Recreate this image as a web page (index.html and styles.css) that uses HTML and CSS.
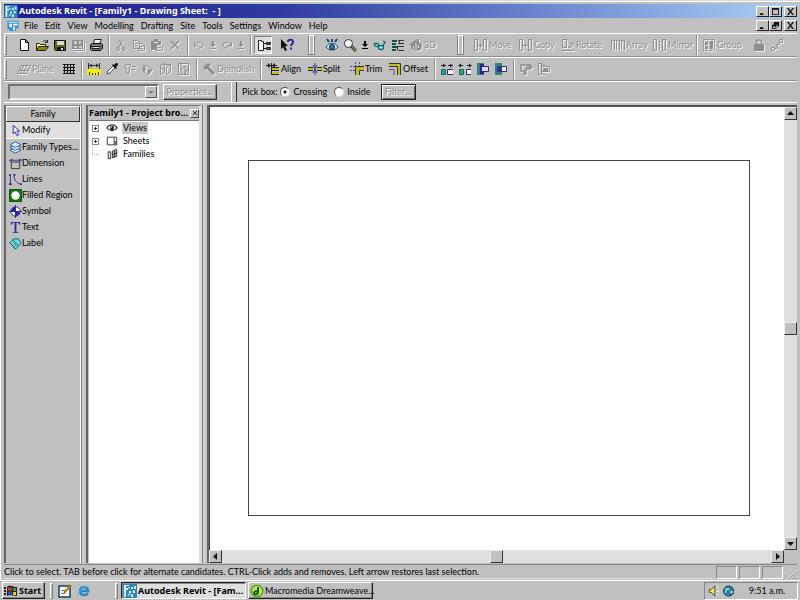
FILE: index.html
```html
<!DOCTYPE html>
<html lang="en">
<head>
<meta charset="utf-8">
<title>Autodesk Revit - [Family1 - Drawing Sheet: - ]</title>
<link rel="stylesheet" href="styles.css">
</head>
<body>
<svg class="defs" aria-hidden="true">
  <symbol id="revit" viewBox="0 0 14 14"><path fill="#2d86b8" d="M0 0h14v14H0z"/><path fill="#d8f0fb" d="M1 1h5v1H3v2h2v2H3v7H1zM8 3h2v2H8zM11 2h2v3h-2zM6 7h2v2H6zM10 7h2v2h-2zM8 10h2v3H8z"/><path fill="none" stroke="#fff" d="M5 3l2 2M10 6l2 2M7 9l-2 3"/></symbol>
  <symbol id="doc" viewBox="0 0 14 14"><path fill="#338fc5" d="M1 2h12v8h-3v3H3v-2H1z"/><path fill="#e5f6ff" d="M2 3h10v1H2zM3 5h3v4H3zM7 5h5v2H7zM7 8h2v4H7z"/></symbol>
  <symbol id="new" viewBox="0 0 14 14"><path fill="#fff" stroke="#111" d="M3.500 1.500h5l3 3v8h-8zM8.500 1.500v3h3"/></symbol>
  <symbol id="open" viewBox="0 0 14 14"><path fill="#ff6" stroke="#222" d="M1.500 12V5.500h3l1 1h5V9"/><path fill="#8a8a00" stroke="#222" d="M1.500 12.500l2-4h10l-3 4z"/><path fill="none" stroke="#222" d="M8 4c1-2 3-2 4 0M12.500 2v2.500H10"/></symbol>
  <symbol id="save" viewBox="0 0 14 14"><path fill="#66660a" stroke="#111" d="M1.500 2.500h11v10h-10l-1-1z"/><path fill="#d8d8d8" d="M4 3h7v4H4z"/><path fill="#111" d="M4 9h7v4H4z"/><path fill="#ddd" d="M8 10h2v2H8z"/></symbol>
  <symbol id="saveall" viewBox="0 0 14 14"><path fill="currentColor" d="M1 2h11v9H1z"/><path fill="#ccc" d="M3 3h3v3H3zM8 3h2v3H8zM3 8h3v2H3zM8 8h3v2H8z"/><path fill="none" stroke="currentColor" d="M3 12.500h10.500V4"/></symbol>
  <symbol id="print" viewBox="0 0 14 14"><path fill="#fff" stroke="#222" d="M4.500 5.500l1-4h7l-2 4z"/><path fill="#777" stroke="#111" d="M1.500 6.500l2-1h9l1 1v4l-2 2h-9l-1-1z"/><path stroke="#222" d="M2 8.500h10M3 10.500h8"/><path stroke="#ddd" d="M4 9.500h6M6 3.500h4"/></symbol>
  <symbol id="cut" viewBox="0 0 14 14"><g fill="none" stroke="currentColor"><path d="M5 2l4 7M9 2L5 9"/><circle cx="4" cy="11" r="1.500"/><circle cx="10" cy="11" r="1.500"/></g></symbol>
  <symbol id="copy" viewBox="0 0 14 14"><path fill="none" stroke="currentColor" d="M1.500 2.500h4l2 2v6h-6zM7.500 5.500h3l2 2v5h-6v-2M3 5.500h3M3 7.500h3M8 8.500h3M8 10.500h3"/></symbol>
  <symbol id="paste" viewBox="0 0 14 14"><path fill="currentColor" d="M1 3h3V1h4v2h3v3H6v6H1z"/><path fill="#d8d8d8" stroke="currentColor" d="M6.500 6.500h4l2 2v4h-6zM8 9.500h3"/><path stroke="#eee" d="M4 4.500h4"/></symbol>
  <symbol id="del" viewBox="0 0 14 14"><path fill="none" stroke="currentColor" stroke-width="1.500" d="M3 3l8 8M11 3l-8 8"/></symbol>
  <symbol id="undo" viewBox="0 0 14 14"><path fill="none" stroke="currentColor" d="M2.500 4v4h4M3 7c3-4 8-3 8 0c0 2-2 3-4 3"/></symbol>
  <symbol id="redo" viewBox="0 0 14 14"><path fill="none" stroke="currentColor" d="M11.500 4v4h-4M11 7c-3-4-8-3-8 0c0 2 2 3 4 3"/></symbol>
  <symbol id="drop" viewBox="0 0 8 14"><path fill="currentColor" d="M3 3h2v3h2L4 9 1 6h2zM1 10h6v1H1z"/></symbol>
  <symbol id="browser" viewBox="0 0 14 14"><path fill="#fff" stroke="#222" stroke-width="1" d="M1.500 2.500h3v1h2v9h-5z"/><path fill="none" stroke="#222" d="M7 5.500h2M7 10.500h2M9.500 4.500h4v2h-4zM9.500 9.500h4v2h-4z"/><path fill="#287a5a" d="M10 5h3v1h-3zM10 10h3v1h-3z"/></symbol>
  <symbol id="help" viewBox="0 0 14 14"><path fill="#111" d="M1 1l7 7H5l2 4-2 1-2-4-2 2z"/><path fill="none" stroke="#2a2a99" stroke-width="2" d="M8 4c0-3 5-3 5 0c0 2-2 2-2 4M11 9.500v2"/></symbol>
  <symbol id="eye" viewBox="0 0 14 14"><path fill="#c5eef8" stroke="#164c72" d="M1 9c3-5 9-5 12 0c-3 4-9 4-12 0z"/><circle cx="7" cy="9" r="2.500" fill="#2582aa" stroke="#123"/><path fill="none" stroke="#164c72" stroke-width="2" d="M2 1l2 3M7 1v3M12 1l-2 3"/></symbol>
  <symbol id="zoom" viewBox="0 0 14 14"><path stroke="#333" stroke-width="3" d="M8 8l5 5"/><path stroke="#caca35" d="M9 9l4 4"/><circle cx="5.500" cy="5.500" r="4" fill="#fff" stroke="#333"/></symbol>
  <symbol id="glasses" viewBox="0 0 14 14"><g fill="#b6f3ef" stroke="#0c6570" stroke-width="1.300"><ellipse cx="3.500" cy="7" rx="2" ry="1.500"/><ellipse cx="8" cy="9.500" rx="2.500" ry="2"/><path fill="none" d="M1 6l1-1M5.500 7.500L7 8M10 8l2-4-2-1"/></g></symbol>
  <symbol id="thin" viewBox="0 0 14 14"><path fill="#184f48" d="M1 2h5v2H1zM1 5h4v2H1zM1 8h5v2H1zM1 11h4v2H1z"/><path stroke="#333" d="M7 2.500h6M7 5.500h6M7 8.500h6M7 12.500h6M8.500 3v3M6.500 8v4"/></symbol>
  <symbol id="house" viewBox="0 0 14 14"><path fill="currentColor" d="M0 7l6-5 2 1V1h2v3l3 3-1 5-5 1-5-2V8z"/><path stroke="#ddd" d="M4.500 8v3M9.500 7v3M7 5v7"/></symbol>
  <symbol id="move" viewBox="0 0 14 14"><path fill="none" stroke="currentColor" d="M.500 1.500h3v11h-3zM9.500 1.500h3v11h-3zM4 7.500h5M6.500 5.500v4"/></symbol>
  <symbol id="rotate" viewBox="0 0 14 14"><path fill="none" stroke="currentColor" d="M1.500 1.500h4v8h-4zM1 12.500h12M7 9.500c3 0 4-1 4-4M9 6l2-2 2 2"/></symbol>
  <symbol id="array" viewBox="0 0 14 14"><path fill="none" stroke="currentColor" d="M.500 12V2.500h3V12M5.500 12V2.500h3V12M10.500 12V2.500h3V12"/></symbol>
  <symbol id="mirror" viewBox="0 0 14 14"><path fill="none" stroke="currentColor" d="M.500 1.500h3v11h-3zM9.500 1.500h3v11h-3zM6.500 3v2M6.500 6v2M6.500 9v2"/></symbol>
  <symbol id="group" viewBox="0 0 14 14"><path fill="none" stroke="currentColor" stroke-dasharray="3 1" d="M1.500 1.500h11v11h-11z"/><path fill="currentColor" d="M3 4h3v3H3zM8 3h3v8H8zM3 8h3v3H3z"/></symbol>
  <symbol id="lock" viewBox="0 0 14 14"><path fill="none" stroke="currentColor" stroke-width="1.500" d="M4.500 7V3.500c0-2 5-2 5 0V7"/><path fill="currentColor" d="M2 6h10v7H2z"/></symbol>
  <symbol id="link" viewBox="0 0 14 14"><path fill="none" stroke="currentColor" d="M1.500 9.500h3v3h-3zM9.500 1.500h3v3h-3zM5 10.500h2v-4h2V5"/></symbol>
  <symbol id="plane" viewBox="0 0 14 14"><path fill="none" stroke="currentColor" d="M4.500 3.500h9l-4 8H.500zM2 8.500h9M7 3l-4 9M10 3l-4 9"/></symbol>
  <symbol id="grid" viewBox="0 0 14 14"><path fill="none" stroke="#111" d="M1 2.500h12M1 5.500h12M1 8.500h12M1 11.500h12M2.500 2v10M5.500 2v10M8.500 2v10M11.500 2v10"/></symbol>
  <symbol id="measure" viewBox="0 0 14 14"><path fill="#f0f000" d="M0 7h14v6H0z"/><path stroke="#333" d="M2.500 10v3M5.500 11v2M8.500 11v2M11.500 10v3M1 3.500h12M1.500 1v6M12.500 1v6"/><path fill="#333" d="M2 3.500l3-2v4zM12 3.500l-3-2v4z"/></symbol>
  <symbol id="dropper" viewBox="0 0 14 14"><path fill="#fff" stroke="#555" d="M2 12l1-3 5-5 2 2-5 5z"/><path fill="#111" d="M7 3l1-1 1 1 2-2h1l1 1v1l-2 2 1 1-1 1z"/></symbol>
  <symbol id="paint" viewBox="0 0 14 14"><path fill="none" stroke="currentColor" d="M3.500 2.500h4v2l-1 1v3l-1 4-2-3v-3l-2-1zM9 4.500h4M9 7.500h3"/></symbol>
  <symbol id="bucket" viewBox="0 0 14 14"><path fill="#ddd" stroke="currentColor" d="M5 3l6 5-4 5-5-4zM3 2v5"/><path fill="currentColor" d="M1 6h4l-2 5zM6 7l5 1-4 5z"/></symbol>
  <symbol id="face" viewBox="0 0 14 14"><path fill="none" stroke="currentColor" d="M1.500 3.500l4-2v9l-4 2zM5.500 2.500h6v7l-4 3v-8l4-2M2 6l3 2"/></symbol>
  <symbol id="split" viewBox="0 0 14 14"><path fill="none" stroke="currentColor" d="M1.500 1.500h10v11h-10zM4 2v6l4-4v8l3-6M4 8v4"/></symbol>
  <symbol id="hammer" viewBox="0 0 14 14"><path fill="currentColor" d="M1 5l5-4 3 2-2 2 6 6-2 2-6-6-2 1z"/></symbol>
  <symbol id="align" viewBox="0 0 14 14"><path stroke="#222" d="M0 3.500h11M5.500 1v12"/><path stroke="#c2c01c" stroke-width="2" d="M6 7h7M6 11h7"/><path stroke="#222" d="M6 5.500h7M6 8.500h7M6 12.500h7"/><path fill="#222" d="M2 1l3 2.500L2 6zM9 1L6 3.500 9 6z"/></symbol>
  <symbol id="splitw" viewBox="0 0 14 14"><path stroke="#c2c01c" stroke-width="2" d="M0 7h5M9 7h5"/><path stroke="#223" d="M0 5.500h5M9 5.500h5M0 8.500h5M9 8.500h5"/><path stroke="#3b379b" d="M7 1v12M5 3l4 8M9 3l-4 8"/></symbol>
  <symbol id="trim" viewBox="0 0 14 14"><path fill="none" stroke="#c2c01c" stroke-width="3" d="M7.500 13V6.500H14"/><path fill="none" stroke="#333" d="M5.500 13V4.500H14M9.500 13V8.500H14"/><path stroke="#4d499b" stroke-dasharray="2 1" d="M0 4.500h5M0 8.500h5M5.500 0v4M9.500 0v4"/></symbol>
  <symbol id="offset" viewBox="0 0 14 14"><path fill="none" stroke="#c2c01c" stroke-width="3" d="M1 3h10v10"/><path fill="none" stroke="#333" d="M1 1.500h11.500V13M1 4.500h8.500V13"/><path fill="none" stroke="#823e73" d="M1 7.500h5V13"/></symbol>
  <symbol id="join1" viewBox="0 0 14 14"><path stroke="#222" d="M1 3.500h5M8 3.500h5"/><path fill="#222" d="M6 3.500l-3-2v4zM13 3.500l-3-2v4z"/><path fill="#22ae7d" stroke="#176552" d="M1.500 7.500h4v5h-4z"/><path fill="#fff" stroke="#27278d" d="M13 7.500H7.500v5H13"/></symbol>
  <symbol id="join2" viewBox="0 0 14 14"><path fill="#222" d="M0 3.500l3-2v4zM14 3.500l-3-2v4z"/><path stroke="#222" d="M2 3.500h3M9 3.500h3"/><path fill="#22ae7d" stroke="#176552" d="M1.500 7.500h4v5h-4z"/><path fill="#fff" stroke="#27278d" d="M13 7.500H8.500v5H13"/></symbol>
  <symbol id="cutg" viewBox="0 0 14 14"><path fill="#36837c" d="M1 1h7v3H5v6h3v3H1z"/><path fill="#ddd" stroke="#27278d" d="M5.500 4.500h7v5h-7z"/><path stroke="#27278d" fill="none" stroke-width="2" d="M8 3H5v8h3"/></symbol>
  <symbol id="cutg2" viewBox="0 0 14 14"><path fill="#36837c" d="M1 1h7v12H1z"/><path fill="#1e3d91" d="M3 4h6v6H3z"/><path fill="#fff" stroke="#27278d" d="M7.500 4.500h5v5h-5z"/></symbol>
  <symbol id="w1" viewBox="0 0 14 14"><path fill="none" stroke="currentColor" stroke-width="1.500" d="M2 3h9v4H7v5H5V9H2zM7 5h6M11 3l2 2-2 2"/></symbol>
  <symbol id="w2" viewBox="0 0 14 14"><path fill="none" stroke="currentColor" d="M1.500 1.500h3v11h-3zM4.500 4.500h8v5h-8zM5 3h3M5 12h3"/><path fill="currentColor" d="M6 6h5v3H6z"/></symbol>
  <symbol id="cursor" viewBox="0 0 14 14"><path fill="#eef" stroke="#2b2b91" d="M4.500 1.500v9l2-2 2 4 2-1-2-4h3z"/></symbol>
  <symbol id="types" viewBox="0 0 14 14"><g fill="#d5eafa" stroke="#2e5c9e"><path d="M1 10l6-3 6 3-6 3z"/><path d="M1 7l6-3 6 3-6 3z"/><path d="M1 4l6-3 6 3-6 3z"/></g></symbol>
  <symbol id="dim" viewBox="0 0 14 14"><path fill="none" stroke="#333" d="M2.500 5.500h9v7h-9z"/><path fill="none" stroke="#39397c" d="M0 3.500h14M2.500 2v4M11.500 2v4M1 5l3-3M10 5l3-3"/></symbol>
  <symbol id="lines" viewBox="0 0 14 14"><path fill="none" stroke="#2d2d95" d="M1.500 2v10M5.500 1v2c0 5 3 8 7 9"/><path fill="#2d2d95" d="M0 1h2v2H0zM0 11h3v2H0zM5 1h2v2H5zM12 11h2v2h-2z"/></symbol>
  <symbol id="fill" viewBox="0 0 14 14"><path fill="#11780f" stroke="#0b4a0b" d="M.500 .500h13v13H.500z"/><circle cx="7" cy="7" r="4.500" fill="#fff"/></symbol>
  <symbol id="symbol" viewBox="0 0 14 14"><circle cx="7" cy="7" r="5" fill="#fff" stroke="#252592"/><path fill="#2a2aa0" d="M7 2v5H2a5 5 0 0 1 5-5zM7 12V7h5a5 5 0 0 1-5 5z"/><path stroke="#252592" d="M7 0v14M0 7h14"/></symbol>
  <symbol id="text" viewBox="0 0 14 14"><path fill="#2a2a9a" d="M2 1h10v3h-1l-1-2H8v10h2v1H4v-1h2V2H4L3 4H2z"/></symbol>
  <symbol id="label" viewBox="0 0 14 14"><path fill="#67e2e4" stroke="#155a62" d="M1 6l4-4h5l3 5-6 6z"/><path fill="none" stroke="#155a62" d="M4 3l6 6M1 6l6 7M5 6l3 4"/></symbol>
  <symbol id="views" viewBox="0 0 14 14"><path fill="#fff" stroke="#222" stroke-width="1.300" d="M1 7c3-5 9-5 12 0c-3 4-9 4-12 0z"/><circle cx="7" cy="7" r="2.500" fill="#222"/><circle cx="6" cy="6" r="1" fill="#aaa"/></symbol>
  <symbol id="sheet" viewBox="0 0 14 14"><path fill="#fff" stroke="#222" d="M1.500 2.500h11v9h-11zM9.500 3v8"/><path stroke="#222" d="M11 7v4"/></symbol>
  <symbol id="families" viewBox="0 0 14 14"><path fill="#ddd" stroke="#222" d="M2.500 4.500h3v8h-3z"/><path fill="#bbb" stroke="#222" d="M7.500 3.500l5-2v8l-5 2zM8 7.500l5-2M10 3v8"/></symbol>
  <symbol id="flag" viewBox="0 0 14 14"><path fill="#222" d="M0 3h2v2H0zM0 6h2v2H0zM0 9h2v2H0zM3 3c3-3 6 0 10 0v9c-4 0-7-2-10 0z"/><path fill="#d33b26" d="M4 4c1-1 3-1 4 0v3C7 6 5 6 4 7z"/><path fill="#2e9f45" d="M9 4h3v3H9z"/><path fill="#314bc4" d="M4 8c1-1 3-1 4 0v3c-1-1-3-1-4 0z"/><path fill="#e7cf28" d="M9 8h3v3H9z"/></symbol>
  <symbol id="desktop" viewBox="0 0 14 14"><path fill="#fff" stroke="#174452" stroke-width="1.500" d="M1 2h11v11H1z"/><path stroke="#4d8794" d="M3 6.500h4M3 9.500h4"/><path stroke="#a57b17" stroke-width="2" d="M6 9l7-8"/></symbol>
  <symbol id="ie" viewBox="0 0 14 14"><path fill="none" stroke="#2c87c4" stroke-width="2.500" d="M3 7h8c0-5-8-5-8 0c0 5 6 5 8 2"/><path fill="none" stroke="#67b7e0" d="M1 12c-1-4 8-12 12-9"/></symbol>
  <symbol id="dw" viewBox="0 0 14 14"><circle cx="7" cy="7" r="6.500" fill="#55a51c"/><circle cx="7" cy="7" r="5" fill="#b9ea54"/><path fill="none" stroke="#1c591a" stroke-width="2" d="M8 3v5c0 3-4 3-4 1s2-2 4-1"/></symbol>
  <symbol id="sound" viewBox="0 0 14 14"><path fill="#f0ec4a" stroke="#444" d="M2.500 5.500h2l4-4v11l-4-4h-2z"/><path fill="none" stroke="#fff" d="M10 4l2-2M10 7h3M10 10l2 2"/></symbol>
  <symbol id="globe" viewBox="0 0 14 14"><circle cx="7" cy="7" r="5.500" fill="#2f7c9b" stroke="#164154"/><path fill="#9cd4dc" d="M4 4h4v2H5v3H3zM9 7h3v3H9z"/><path stroke="#224" d="M8 12l5-3"/></symbol>
</svg>

<div class="window">
  <header class="titlebar">
    <svg class="ico"><use href="#revit"/></svg>
    <h1>Autodesk Revit - [Family1 - Drawing Sheet: &nbsp;- ]</h1>
    <div class="winbtns">
      <button class="wb" aria-label="Minimize"><svg viewBox="0 0 10 8"><path d="M2 6h4v2H2z"/></svg></button>
      <button class="wb" aria-label="Maximize"><svg viewBox="0 0 10 8"><path d="M1 0h8v8H1zM2 2v5h6V2z" fill-rule="evenodd"/></svg></button>
      <button class="wb last" aria-label="Close"><svg viewBox="0 0 10 8"><path d="M1 0h2l2 3 2-3h2L6 4l3 4H7L5 5 3 8H1l3-4z"/></svg></button>
    </div>
  </header>
  <nav class="menubar">
    <svg class="ico"><use href="#doc"/></svg>
    <a href="#">File</a><a href="#">Edit</a><a href="#">View</a><a href="#">Modelling</a><a href="#">Drafting</a><a href="#">Site</a><a href="#">Tools</a><a href="#">Settings</a><a href="#">Window</a><a href="#">Help</a>
    <div class="winbtns">
      <button class="wb" aria-label="Minimize document"><svg viewBox="0 0 10 8"><path d="M2 6h4v2H2z"/></svg></button>
      <button class="wb" aria-label="Restore document"><svg viewBox="0 0 10 8"><path d="M3 0h6v5H7V3H3zM1 3h5v5H1zM2 5v2h3V5z" fill-rule="evenodd"/></svg></button>
      <button class="wb last" aria-label="Close document"><svg viewBox="0 0 10 8"><path d="M1 0h2l2 3 2-3h2L6 4l3 4H7L5 5 3 8H1l3-4z"/></svg></button>
    </div>
  </nav>

  <div class="toolbar">
    <div class="set set-standard">
      <span class="grip"></span>
      <button class="tb" aria-label="New"><svg><use href="#new"/></svg></button>
      <button class="tb" aria-label="Open"><svg><use href="#open"/></svg></button>
      <button class="tb" aria-label="Save"><svg><use href="#save"/></svg></button>
      <button class="tb" disabled aria-label="Save all"><svg><use href="#saveall"/></svg></button>
      <button class="tb" aria-label="Print"><svg><use href="#print"/></svg></button>
      <span class="sep"></span>
      <button class="tb" disabled aria-label="Cut"><svg><use href="#cut"/></svg></button>
      <button class="tb" disabled aria-label="Copy"><svg><use href="#copy"/></svg></button>
      <button class="tb" disabled aria-label="Paste"><svg><use href="#paste"/></svg></button>
      <button class="tb" disabled aria-label="Delete"><svg><use href="#del"/></svg></button>
      <span class="sep"></span>
      <button class="tb slim" disabled aria-label="Undo"><svg><use href="#undo"/></svg></button>
      <button class="tb dd" disabled aria-label="Undo list"><svg><use href="#drop"/></svg></button>
      <button class="tb slim" disabled aria-label="Redo"><svg><use href="#redo"/></svg></button>
      <button class="tb dd" disabled aria-label="Redo list"><svg><use href="#drop"/></svg></button>
      <span class="sep"></span>
      <button class="tb on" aria-label="Project browser"><svg><use href="#browser"/></svg></button>
      <button class="tb help" aria-label="Help pointer"><svg><use href="#help"/></svg></button>
    </div>
    <div class="set set-view">
      <span class="grip double"></span>
      <button class="tb" aria-label="Dynamic view"><svg><use href="#eye"/></svg></button>
      <button class="tb" aria-label="Zoom"><svg><use href="#zoom"/></svg></button>
      <button class="tb dd" aria-label="Zoom list"><svg><use href="#drop"/></svg></button>
      <button class="tb" aria-label="Hide or isolate"><svg><use href="#glasses"/></svg></button>
      <button class="tb" aria-label="Thin lines"><svg><use href="#thin"/></svg></button>
      <button class="tb wide" disabled><svg><use href="#house"/></svg>3D</button>
    </div>
    <div class="set set-edit">
      <span class="grip double"></span>
      <button class="tb w45" disabled><svg><use href="#move"/></svg>Move</button>
      <button class="tb w42" disabled><svg><use href="#move"/></svg>Copy</button>
      <button class="tb w50" disabled><svg><use href="#rotate"/></svg>Rotate</button>
      <button class="tb w42" disabled><svg><use href="#array"/></svg>Array</button>
      <button class="tb w42" disabled><svg><use href="#mirror"/></svg>Mirror</button>
      <span class="sep"></span>
      <button class="tb w50" disabled><svg><use href="#group"/></svg>Group</button>
      <button class="tb" disabled aria-label="Lock"><svg><use href="#lock"/></svg></button>
      <button class="tb" disabled aria-label="Link"><svg><use href="#link"/></svg></button>
    </div>
  </div>

  <div class="toolbar">
    <div class="set set-tools">
      <span class="grip"></span>
      <button class="tb w45" disabled><svg><use href="#plane"/></svg>Plane</button>
      <button class="tb" aria-label="Grid"><svg><use href="#grid"/></svg></button>
      <span class="sep"></span>
      <button class="tb" aria-label="Measure"><svg><use href="#measure"/></svg></button>
      <button class="tb" aria-label="Match"><svg><use href="#dropper"/></svg></button>
      <button class="tb" disabled aria-label="Linework"><svg><use href="#paint"/></svg></button>
      <button class="tb" disabled aria-label="Paint"><svg><use href="#bucket"/></svg></button>
      <button class="tb" disabled aria-label="Split face"><svg><use href="#face"/></svg></button>
      <button class="tb" disabled aria-label="Coping"><svg><use href="#split"/></svg></button>
      <span class="sep"></span>
      <button class="tb w57" disabled><svg><use href="#hammer"/></svg>Demolish</button>
      <span class="sep"></span>
      <button class="tb w42"><svg><use href="#align"/></svg>Align</button>
      <button class="tb w42"><svg><use href="#splitw"/></svg>Split</button>
      <button class="tb w38"><svg><use href="#trim"/></svg>Trim</button>
      <button class="tb w45"><svg><use href="#offset"/></svg>Offset</button>
      <span class="sep"></span>
      <button class="tb" aria-label="Join"><svg><use href="#join1"/></svg></button>
      <button class="tb" aria-label="Unjoin"><svg><use href="#join2"/></svg></button>
      <button class="tb" aria-label="Cut geometry"><svg><use href="#cutg"/></svg></button>
      <button class="tb" aria-label="Uncut geometry"><svg><use href="#cutg2"/></svg></button>
      <span class="sep"></span>
      <button class="tb" disabled aria-label="Wall joins"><svg><use href="#w1"/></svg></button>
      <button class="tb" disabled aria-label="Wall opening"><svg><use href="#w2"/></svg></button>
    </div>
  </div>

  <div class="options">
    <div class="combo">
      <select disabled aria-label="Type selector"><option></option></select>
      <span class="combo-arrow" aria-hidden="true"></span>
    </div>
    <button class="push props" disabled>Properties...</button>
    <span class="divider"></span>
    <span class="pick">Pick box:</span>
    <input type="radio" name="pick" id="crossing" checked><label for="crossing">Crossing</label>
    <input type="radio" name="pick" id="inside"><label for="inside">Inside</label>
    <button class="push filter" disabled>Filter...</button>
  </div>

  <main class="work">
    <aside class="design">
      <h2>Family</h2>
      <button class="tool active"><svg><use href="#cursor"/></svg>Modify</button>
      <button class="tool"><svg><use href="#types"/></svg>Family Types...</button>
      <button class="tool"><svg><use href="#dim"/></svg>Dimension</button>
      <button class="tool"><svg><use href="#lines"/></svg>Lines</button>
      <button class="tool"><svg><use href="#fill"/></svg>Filled Region</button>
      <button class="tool"><svg><use href="#symbol"/></svg>Symbol</button>
      <button class="tool"><svg><use href="#text"/></svg>Text</button>
      <button class="tool"><svg><use href="#label"/></svg>Label</button>
    </aside>
    <div class="splitter"></div>
    <aside class="browser">
      <div class="browser-head"><h2>Family1 - Project bro...</h2><button aria-label="Close browser"><svg viewBox="0 0 6 6"><path fill="none" stroke="#333" d="M1 1l4 4M5 1L1 5"/></svg></button></div>
      <ul class="tree">
        <li><button class="expand" aria-label="Expand Views"></button><svg><use href="#views"/></svg><span class="sel">Views</span></li>
        <li><button class="expand" aria-label="Expand Sheets"></button><svg><use href="#sheet"/></svg><span>Sheets</span></li>
        <li><i class="leaf"></i><svg><use href="#families"/></svg><span>Families</span></li>
      </ul>
    </aside>
    <div class="splitter"></div>
    <section class="view">
      <div class="canvas"><div class="sheet"></div></div>
      <div class="vscroll">
        <button class="sb" aria-label="Scroll up"><svg viewBox="0 0 7 7"><path d="M0 5h7L3.500 1z"/></svg></button>
        <span class="room"></span><span class="thumb"></span><span class="room"></span>
        <button class="sb" aria-label="Scroll down"><svg viewBox="0 0 7 7"><path d="M0 2h7L3.500 6z"/></svg></button>
      </div>
      <div class="hscroll">
        <button class="sb" aria-label="Scroll left"><svg viewBox="0 0 7 7"><path d="M5 0v7L1 3.500z"/></svg></button>
        <span class="room"></span><span class="thumb"></span><span class="room"></span>
        <button class="sb" aria-label="Scroll right"><svg viewBox="0 0 7 7"><path d="M2 0v7l4-3.500z"/></svg></button>
      </div>
    </section>
  </main>

  <div class="status">
    <p>Click to select. TAB before click for alternate candidates. CTRL-Click adds and removes. Left arrow restores last selection.</p>
    <span class="pane"></span><span class="pane"></span><span class="pane"></span>
    <svg class="sizer" viewBox="0 0 12 12"><path stroke="#fff" d="M0 12L12 0M4 12l8-8M8 12l4-4"/><path stroke="#808080" d="M1 12L12 1M5 12l7-7M9 12l3-3"/></svg>
  </div>
</div>

<footer class="taskbar">
  <button class="start"><svg><use href="#flag"/></svg>Start</button>
  <span class="grip"></span>
  <button class="quick" aria-label="Show desktop"><svg><use href="#desktop"/></svg></button>
  <button class="quick" aria-label="Internet browser"><svg><use href="#ie"/></svg></button>
  <span class="grip tasks-grip"></span>
  <button class="task current"><svg><use href="#revit"/></svg>Autodesk Revit - [Fam...</button>
  <button class="task"><svg><use href="#dw"/></svg>Macromedia Dreamweave...</button>
  <div class="tray"><svg><use href="#sound"/></svg><svg><use href="#globe"/></svg><time>9:51 a.m.</time></div>
</footer>
</body>
</html>
```
FILE: styles.css
```css
* { box-sizing: border-box; }
html, body { height: 100%; }
body {
  margin: 0;
  display: flex;
  flex-direction: column;
  background: #c0c0c0;
  color: #000;
  font: 9px/12px Lato, "Liberation Sans", sans-serif;
  overflow: hidden;
}
button, select, input { font: inherit; color: inherit; margin: 0; padding: 0; }
button { background: none; border: 0; white-space: nowrap; }
h1, h2, p, ul { margin: 0; padding: 0; font-size: 9px; line-height: 12px; white-space: nowrap; }
.titlebar h1, .browser-head h2, .start, .task.current { font-family: "Noto Sans", sans-serif; font-weight: bold; }
svg { display: block; flex: none; width: 14px; height: 14px; }
.defs { position: absolute; width: 0; height: 0; }

.window {
  flex: 1;
  min-height: 0;
  display: flex;
  flex-direction: column;
  padding: 3px 3px 0 4px;
  border-top: 1px solid #d8d8d8;
  box-shadow: inset 1px 1px #fff;
}

/* Title and menu */
.titlebar {
  display: flex;
  align-items: center;
  height: 14px;
  flex: none;
  color: #fff;
  background: linear-gradient(to right, #1f1f8f, #2e3c9f 35%, #6078c8 62%, #a6caf0 97%);
}
.titlebar h1 { margin-left: 1px; }
.ico { height: 13px; }
.winbtns { display: flex; margin-left: auto; }
.wb {
  display: flex;
  width: 13px;
  height: 11px;
  padding: 1px;
  align-items: center;
  justify-content: center;
  background: #c0c0c0;
  border: 1px solid;
  border-color: #fff #222 #222 #fff;
}
.wb svg { width: 9px; height: 7px; fill: #111; }
.wb.last { margin-left: 2px; }
.menubar { display: flex; align-items: center; height: 15px; flex: none; }
.menubar .ico { margin: 0 4px 0 2px; }
.menubar a { color: inherit; text-decoration: none; margin-right: 7px; }

/* Toolbars */
.toolbar {
  display: flex;
  flex: none;
  height: 24px;
  border-top: 1px solid #fff;
  border-bottom: 1px solid #909090;
}
.set { display: flex; align-items: center; flex: none; }
.set-standard { width: 304px; }
.set-view { width: 149px; }
.grip {
  width: 3px;
  height: 20px;
  flex: none;
  margin-right: 8px;
  border: 1px solid;
  border-color: #fff #808080 #808080 #fff;
}
.grip.double { width: 7px; margin-right: 8px; border-left-color: #808080; box-shadow: inset 1px 0 #fff, inset -1px 0 #fff; }
.sep { width: 2px; height: 20px; margin: 0 2px 0 3px; flex: none; border-left: 1px solid #909090; border-right: 1px solid #fff; }
.tb { display: flex; align-items: center; justify-content: flex-start; gap: 1px; width: 18px; height: 18px; padding-left: 2px; flex: none; }
.tb:disabled { color: #8e8e8e; text-shadow: 1px 1px #fff; }
.tb:disabled svg { filter: drop-shadow(1px 1px 0 #eee); }
.tb.slim { width: 16px; padding-left: 1px; }
.tb.dd { width: 12px; }
.tb.dd svg { width: 8px; }
.tb.on { background: #dedede; border: 1px solid; border-color: #808080 #fff #fff #808080; }
.tb.help { margin-left: 6px; }
.tb.wide { width: 34px; }
.tb.w38 { width: 38px; }
.tb.w42 { width: 42px; }
.tb.w45 { width: 45px; }
.tb.w50 { width: 50px; }
.tb.w57 { width: 57px; }

/* Options bar */
.options { display: flex; align-items: center; height: 21px; flex: none; padding-left: 4px; border-top: 1px solid #fff; }
.combo { display: flex; width: 151px; height: 16px; border: 2px solid; border-color: #707070 #eee #eee #707070; }
.combo select { flex: 1; min-width: 0; appearance: none; background: #c0c0c0; border: 0; }
.combo-arrow { width: 12px; border: 1px solid; border-color: #fff #555 #555 #fff; display: grid; place-items: center; }
.combo-arrow::before { content: ""; border: 3px solid transparent; border-top-color: #808080; border-bottom: 0; }
.push { height: 16px; background: #c0c0c0; border: 1px solid; border-color: #fff #333 #333 #fff; box-shadow: inset -1px -1px #888; }
.push:disabled { color: #909090; text-shadow: 1px 1px #fff; }
.props { width: 54px; margin-left: 4px; }
.divider { width: 6px; height: 20px; margin: 0 5px 0 14px; border-left: 1px solid #fff; border-right: 1px solid #333; }
.pick { margin-right: 3px; }
.options input {
  appearance: none;
  width: 10px;
  height: 10px;
  margin-right: 3px;
  border-radius: 50%;
  background: #fff;
  border: 1px solid;
  border-color: #555 #ddd #ddd #555;
}
.options input:checked { background: radial-gradient(circle, #111 0 1px, #fff 2px); }
.options label { margin-right: 7px; }
.filter { width: 35px; margin-left: 3px; border-color: #222; box-shadow: inset 1px 1px #fff, inset -1px -1px #666; }

/* Workspace */
.work { flex: 1; min-height: 0; display: flex; border-top: 1px solid #fff; padding-top: 2px; }
.design { width: 77px; flex: none; border-left: 2px solid #666; border-right: 1px solid #fff; border-top: 1px solid #888; }
.design h2 { height: 16px; line-height: 14px; text-align: center; font-weight: normal; border: 1px solid; border-color: #fff #333 #333 #fff; }
.tool { display: flex; align-items: center; width: 100%; height: 16px; padding-left: 3px; }
.tool svg { width: 13px; height: 13px; }
.tool.active { height: 17px; background: #dfdfdf; border-bottom: 1px solid #fff; }
.splitter { width: 7px; flex: none; border-left: 1px solid #777; border-right: 2px solid #666; background: linear-gradient(to right, #d8d8d8, #c0c0c0); }
.browser { width: 114px; flex: none; display: flex; flex-direction: column; border-top: 1px solid #777; border-right: 3px solid #ddd; }
.browser-head { display: flex; align-items: center; height: 14px; padding-left: 1px; flex: none; }
.browser-head h2 { flex: 1; min-width: 0; }
.browser-head button { width: 9px; height: 9px; display: grid; place-items: center; border: 1px solid; border-color: #fff #444 #444 #fff; }
.browser-head svg { width: 6px; height: 6px; }
.tree { flex: 1; margin-left: 1px; padding: 1px 0 0 3px; background: #fff; border-top: 1px solid #777; list-style: none; }
.tree li { display: flex; align-items: center; height: 12px; margin-bottom: 1px; }
.tree svg { width: 14px; height: 12px; margin: 0 3px 0 6px; }
.expand { width: 7px; height: 7px; border: 1px solid #888; background: linear-gradient(#222, #222) center/3px 1px no-repeat, linear-gradient(#222, #222) center/1px 3px no-repeat; }
.leaf { width: 7px; height: 7px; border: dotted #aaa; border-width: 0 0 1px 1px; margin-bottom: 6px; }
.tree span { padding: 0 1px; height: 12px; }
.tree .sel { background: #c8c8c8; }
.view { flex: 1; min-width: 0; display: grid; grid-template: 1fr 13px / 1fr 13px; border-top: 2px solid #555; }
.canvas { background: #fff; padding: 53px 34px 34px 38px; display: flex; border-left: 1px solid #444; }
.sheet { flex: 1; border: 1px solid #444; }
.vscroll, .hscroll { display: flex; background: #dfdfdf; }
.vscroll { flex-direction: column; }
.sb, .thumb { width: 13px; height: 13px; flex: none; display: grid; place-items: center; background: #c0c0c0; border: 1px solid; border-color: #eee #333 #333 #eee; }
.sb svg { width: 7px; height: 7px; fill: #111; }
.room { flex: 1; }

/* Status line */
.status { display: flex; align-items: center; gap: 2px; height: 16px; flex: none; margin-top: 1px; border-top: 1px solid #888; }
.status p { flex: 1; min-width: 0; overflow: hidden; height: 13px; border-bottom: 1px solid #ddd; }
.pane { width: 21px; height: 13px; border: 1px solid; border-color: #888 #fff #fff #888; }
.sizer { width: 10px; height: 10px; margin-left: 2px; align-self: flex-end; }

/* Taskbar */
.taskbar { display: flex; align-items: center; height: 20px; flex: none; padding: 0 2px; border-top: 1px solid #fff; }
.taskbar svg { margin-right: 1px; }
.start, .task { display: flex; align-items: center; height: 17px; border: 1px solid; border-color: #fff #222 #222 #fff; box-shadow: inset -1px -1px #888; }
.start { width: 43px; padding-left: 1px; margin-right: 5px; }
.taskbar .grip { height: 16px; margin-right: 4px; }
.quick { width: 19px; height: 16px; padding-left: 1px; }
.taskbar .tasks-grip { margin: 0 3px 0 20px; }
.task { width: 125px; padding-left: 1px; margin-right: 2px; }
.task.current { background: #dfdfdf; border-color: #222 #fff #fff #222; box-shadow: inset 1px 1px #888; }
.tray { display: flex; align-items: center; width: 94px; height: 18px; margin-left: auto; padding-left: 2px; border: 1px solid; border-color: #888 #fff #fff #888; }
.tray svg { width: 13px; margin-right: 2px; }
.tray time { margin: 0 auto; }
```
